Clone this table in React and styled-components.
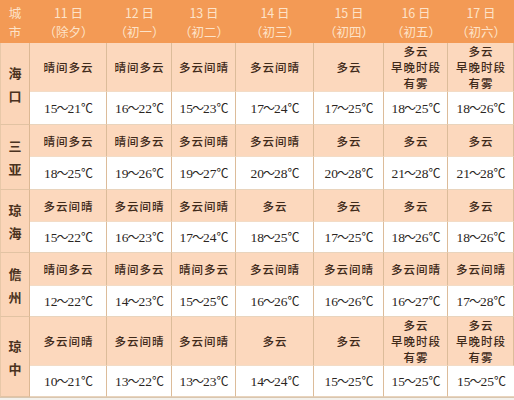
import React from "react";
import styled, { createGlobalStyle } from "styled-components";

const Global = createGlobalStyle`
  html, body { margin: 0; padding: 0; background: #f3f1ec; }
  * { box-sizing: border-box; }
`;

const Table = styled.div`
  display: grid;
  width: 514px;
  grid-template-columns: 30px 77px 65px 64px 78px 70px 64px 66px;
  grid-template-rows: 43px 49px 33px 32px 33px 32px 31px 33px 31px 49px 31px;
  background: #ffffff;
  border-bottom: 1px solid #d8c6b0;
`;

const Head = styled.div`
  background: #f39a55;
  color: #fde3c9;
  font-family: "Noto Sans CJK SC", "Noto Sans", sans-serif;
  font-size: 12.5px;
  line-height: 19px;
  display: flex;
  flex-direction: column;
  align-items: center;
  justify-content: center;
  padding-top: 1px;
`;

const City = styled.div`
  grid-row: span 2;
  background: #fbd5b8;
  border-right: 1px solid #dcb894;
  border-bottom: 1px solid #e2c3a3;
  border-left: 1px solid #e8c8a8;
  display: flex;
  flex-direction: column;
  align-items: center;
  justify-content: center;
  gap: 8px;
  font-family: "Noto Sans CJK SC", sans-serif;
  font-weight: 700;
  font-size: 13px;
  line-height: 15px;
  color: #4a3220;
`;

const Cell = styled.div`
  background: ${(p) => (p.$weather ? "#fcd8bd" : "#ffffff")};
  border-right: 1px solid #dcbc9a;
  border-bottom: 1px solid ${(p) => (p.$weather ? "#f3dcc6" : "#e9d4bd")};
  display: flex;
  flex-direction: column;
  align-items: center;
  justify-content: center;
  text-align: center;
  color: ${(p) => (p.$weather ? "#3f2a1a" : "#2a2522")};
  font-family: ${(p) =>
    p.$weather
      ? `"Noto Sans CJK SC", sans-serif`
      : `"Liberation Serif", "Noto Sans CJK SC", serif`};
  font-size: ${(p) => (p.$weather ? "11.5px" : "13.5px")};
  font-weight: ${(p) => (p.$weather ? 500 : 400)};
  letter-spacing: ${(p) => (p.$weather ? "1px" : "0")};
  line-height: 16px;
  padding-left: ${(p) => (p.$weather ? "1px" : "0")};
  &:last-child {
    border-right: none;
  }
`;

const Tilde = styled.span`
  font-family: "Noto Sans CJK SC", sans-serif;
  font-size: 12px;
  margin: 0 -1px;
`;

const Degree = styled.span`
  font-family: "Noto Sans CJK SC", sans-serif;
  font-size: 12px;
  letter-spacing: -1px;
`;

const days = [
  ["11日", "（除夕）"],
  ["12日", "（初一）"],
  ["13日", "（初二）"],
  ["14日", "（初三）"],
  ["15日", "（初四）"],
  ["16日", "（初五）"],
  ["17日", "（初六）"],
];

const FOG = ["多云", "早晚时段", "有雾"];

const rows = [
  {
    city: ["海", "口"],
    w: ["晴间多云", "晴间多云", "多云间晴", "多云间晴", "多云", FOG, FOG],
    t: [[15, 21], [16, 22], [15, 23], [17, 24], [17, 25], [18, 25], [18, 26]],
  },
  {
    city: ["三", "亚"],
    w: ["晴间多云", "晴间多云", "多云间晴", "多云间晴", "多云", "多云", "多云"],
    t: [[18, 25], [19, 26], [19, 27], [20, 28], [20, 28], [21, 28], [21, 28]],
  },
  {
    city: ["琼", "海"],
    w: ["多云间晴", "多云间晴", "多云间晴", "多云", "多云", "多云", "多云"],
    t: [[15, 22], [16, 23], [17, 24], [18, 25], [17, 25], [18, 26], [18, 26]],
  },
  {
    city: ["儋", "州"],
    w: ["晴间多云", "晴间多云", "晴间多云", "多云间晴", "多云间晴", "多云间晴", "多云间晴"],
    t: [[12, 22], [14, 23], [15, 25], [16, 26], [16, 26], [16, 27], [17, 28]],
  },
  {
    city: ["琼", "中"],
    w: ["多云间晴", "多云间晴", "多云间晴", "多云", "多云", FOG, FOG],
    t: [[10, 21], [13, 22], [13, 23], [14, 24], [15, 25], [15, 25], [15, 25]],
  },
];

const Line = styled.span`
  display: block;
`;

export default function App() {
  return (
    <>
      <Global />
      <Table>
        <Head>
          <span>城</span>
          <span>市</span>
        </Head>
        {days.map(([d, l]) => (
          <Head key={d}>
            <span>{d.replace("日", " 日")}</span>
            <span>{l}</span>
          </Head>
        ))}
        {rows.map((r, ri) => (
          <React.Fragment key={ri}>
            <City>
              <span>{r.city[0]}</span>
              <span>{r.city[1]}</span>
            </City>
            {r.w.map((w, i) => (
              <Cell $weather key={"w" + i}>
                {Array.isArray(w) ? w.map((x) => <Line key={x}>{x}</Line>) : w}
              </Cell>
            ))}
            {r.t.map(([lo, hi], i) => (
              <Cell key={"t" + i}>
                <span>
                  {lo}
                  <Tilde>～</Tilde>
                  {hi}
                  <Degree>℃</Degree>
                </span>
              </Cell>
            ))}
          </React.Fragment>
        ))}
      </Table>
    </>
  );
}
